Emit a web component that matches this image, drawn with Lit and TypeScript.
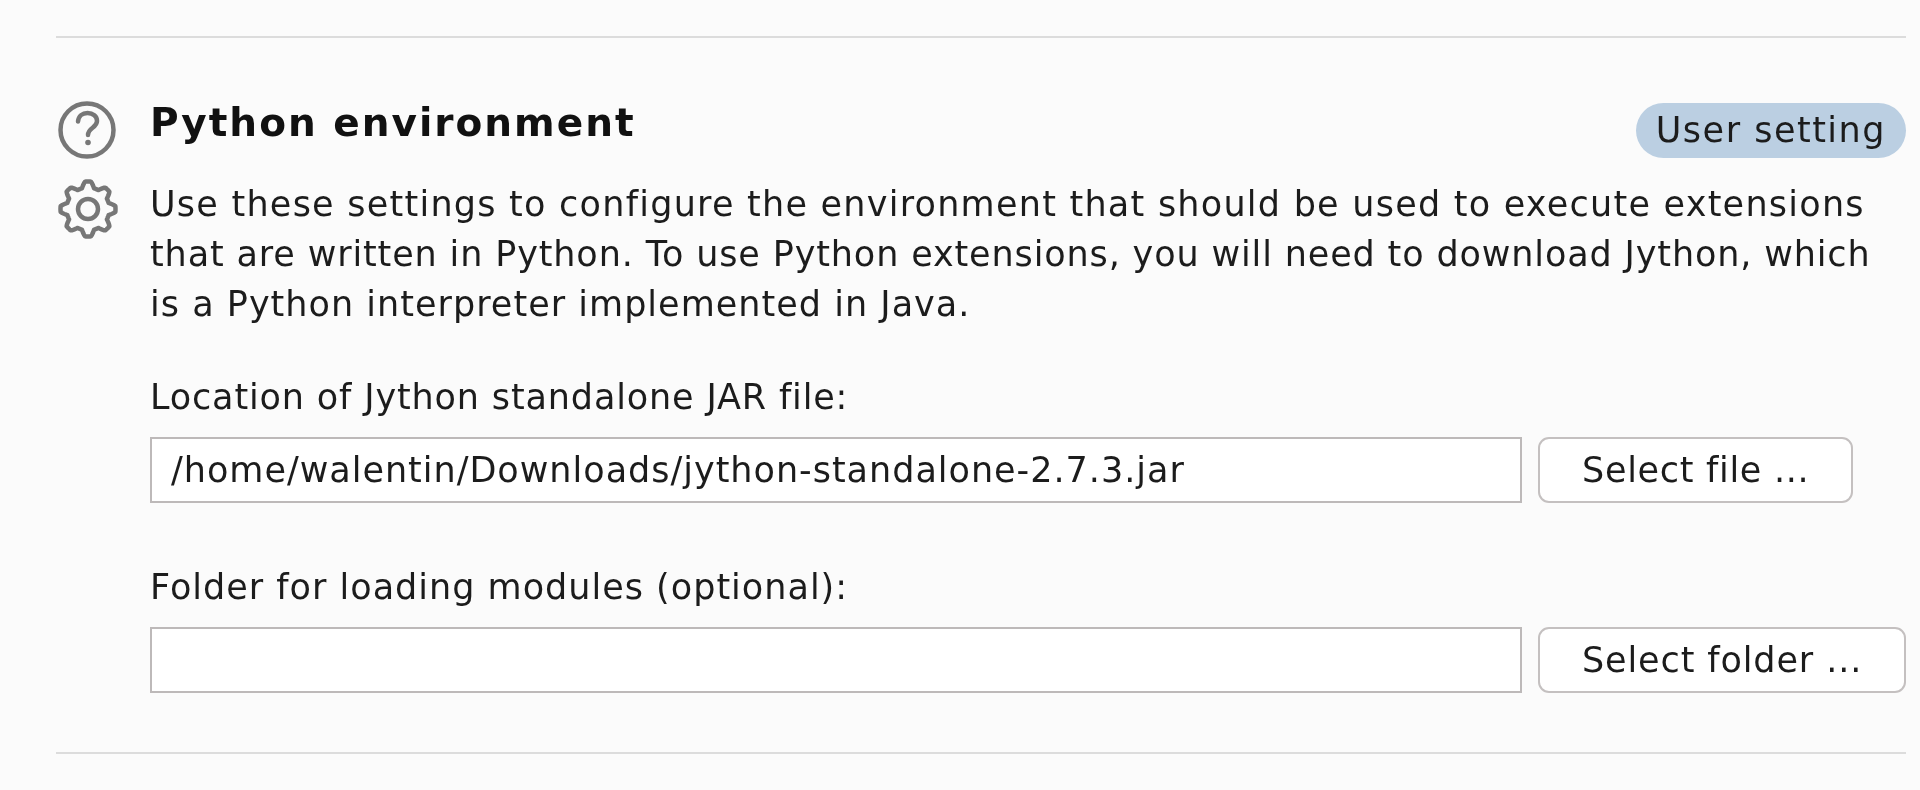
import {LitElement, html, css, svg} from 'lit';
import {customElement} from 'lit/decorators.js';

// gear outline sampled in polar form, 8 rounded teeth
function gearPath(cx: number, cy: number, inner: number, outer: number, teeth = 8) {
    const pts: string[] = [];
    const steps = 240;
    for (let i = 0; i < steps; i++) {
        const a = (i / steps) * Math.PI * 2;
        const wave = Math.cos(a * teeth);
        const t = Math.max(-1, Math.min(1, wave * 1.5));
        const r = inner + ((t + 1) / 2) * (outer - inner);
        const x = cx + r * Math.sin(a);
        const y = cy - r * Math.cos(a);
        pts.push(`${i ? 'L' : 'M'}${x.toFixed(2)} ${y.toFixed(2)}`);
    }
    return pts.join('') + 'Z';
}

@customElement('app-root')
export class AppRoot extends LitElement {

    static styles = css`
        :host {
            display: block;
            height: 790px;
            box-sizing: border-box;
            padding: 36px 14px 0 56px;
            background: #fbfbfb;
            color: #1c1c1c;
            font-family: "DejaVu Sans", sans-serif;
            font-size: 35px;
            overflow: hidden;
        }

        .page {
            filter: blur(0.6px);
        }

        .rule {
            height: 2px;
            background: #dcdcdc;
        }

        .section {
            display: flex;
            padding-top: 62px;
        }

        .icons {
            width: 94px;
            flex: none;
            display: flex;
            flex-direction: column;
            gap: 19px;
        }

        .icons svg {
            display: block;
        }

        .body {
            flex: 1;
            min-width: 0;
            padding-top: 3px;
        }

        .head {
            display: flex;
            justify-content: space-between;
            height: 55px;
        }

        h2 {
            margin: -5px 0 0;
            font-size: 39px;
            font-weight: 700;
            line-height: 50px;
            letter-spacing: 2px;
            color: #111;
        }

        .pill {
            height: 55px;
            line-height: 55px;
            padding: 0 20px;
            border-radius: 28px;
            background: #bbcfe2;
            white-space: nowrap;
            letter-spacing: 1.5px;
        }

        .desc {
            margin: 21px 0 0;
            line-height: 50px;
            white-space: nowrap;
        }

        .l1 { letter-spacing: 1.24px; }
        .l2 { letter-spacing: 0.86px; }
        .l3 { letter-spacing: 1.02px; }

        .field-label {
            line-height: 40px;
            margin-top: 48px;
            letter-spacing: 0.85px;
        }

        .field-label.second {
            margin-top: 64px;
            letter-spacing: 1px;
        }

        .field {
            display: flex;
            gap: 16px;
            margin-top: 20px;
        }

        .input {
            flex: none;
            width: 1372px;
            height: 66px;
            box-sizing: border-box;
            border: 2px solid #bdb9b9;
            background: #fff;
            padding-left: 19px;
            line-height: 62px;
            white-space: nowrap;
            letter-spacing: 0.98px;
        }

        .btn {
            flex: none;
            height: 66px;
            box-sizing: border-box;
            border: 2px solid #c4c0c0;
            border-radius: 11px;
            background: #fff;
            padding: 0 42px;
            line-height: 62px;
            white-space: nowrap;
            letter-spacing: 0.7px;
        }

        .btn.folder {
            letter-spacing: 0.88px;
        }

        .rule.bottom {
            margin-top: 59px;
        }
    `

    render() {
        return html`
            <div class="page">
                <div class="rule"></div>
                <div class="section">
                    <div class="icons">
                        <svg width="60" height="60" viewBox="0 0 60 60" fill="none" stroke="#777" stroke-width="4.5">
                            <circle cx="31" cy="30" r="26.5"></circle>
                            <path d="M22 21.500c.5-5.500 4.500-8.500 9.500-8.500 5.500 0 9.500 3.500 9.500 8 0 7-9 6.500-9 14" stroke-linecap="round"></path>
                            <circle cx="32" cy="42.500" r="2.800" fill="#777" stroke="none"></circle>
                        </svg>
                        <svg width="64" height="60" viewBox="0 0 64 60" fill="none" stroke="#777" stroke-width="4.500">
                            ${svg`<path d=${gearPath(32, 30, 21.5, 27.5)} stroke-linejoin="round"></path>`}
                            <circle cx="32" cy="30" r="10"></circle>
                        </svg>
                    </div>
                    <div class="body">
                        <div class="head">
                            <h2>Python environment</h2>
                            <div class="pill">User setting</div>
                        </div>
                        <p class="desc"><span class="l1">Use these settings to configure the environment that should be used to execute extensions</span><br><span class="l2">that are written in Python. To use Python extensions, you will need to download Jython, which</span><br><span class="l3">is a Python interpreter implemented in Java.</span></p>
                        <div class="field-label">Location of Jython standalone JAR file:</div>
                        <div class="field">
                            <div class="input">/home/walentin/Downloads/jython-standalone-2.7.3.jar</div>
                            <div class="btn">Select file ...</div>
                        </div>
                        <div class="field-label second">Folder for loading modules (optional):</div>
                        <div class="field">
                            <div class="input"></div>
                            <div class="btn folder">Select folder ...</div>
                        </div>
                    </div>
                </div>
                <div class="rule bottom"></div>
            </div>
        `
    }
}
